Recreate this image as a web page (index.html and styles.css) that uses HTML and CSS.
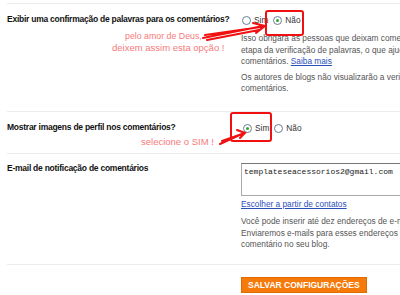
FILE: index.html
```html
<!DOCTYPE html>
<html lang="pt-BR">
<head>
  <meta charset="UTF-8" />
  <title>Configurações de comentários</title>
  <link rel="stylesheet" href="styles.css">
</head>
<body>
  <div class="settings">

    <!-- Verificação de palavras -->
    <div class="row row-words">
      <div class="label">Exibir uma confirmação de palavras para os comentários?</div>
      <div class="field">
        <div class="radios">
          <span class="radio"></span><span class="opt">Sim</span>
          <span class="radio checked"></span><span class="opt">Não</span>
        </div>
        <p class="help">Isso obrigará as pessoas que deixam comentários a passar por uma<br>etapa da verificação de palavras, o que ajudará a reduzir o spam nos<br>comentários. <a href="#">Saiba mais</a></p>
        <p class="help">Os autores de blogs não visualizarão a verificação de palavras nos<br>comentários.</p>
      </div>
      <div class="note note-1">pelo amor de Deus,</div>
      <div class="note note-1b">deixem assim esta opção !</div>
      <div class="mark mark-1"></div>
      <svg class="arrow arrow-1" width="70" height="20" viewBox="0 0 70 20">
        <path d="M2 17 L62 5 M4 14 L60 6 M6 19 L58 9 M52 2 L64 5 L55 12" stroke="#f01010" stroke-width="2" fill="none" stroke-linecap="round" />
      </svg>
    </div>

    <!-- Imagens de perfil -->
    <div class="row row-avatars">
      <div class="label">Mostrar imagens de perfil nos comentários?</div>
      <div class="field">
        <div class="radios">
          <span class="radio checked"></span><span class="opt">Sim</span>
          <span class="radio"></span><span class="opt">Não</span>
        </div>
      </div>
      <div class="note note-2">selecione o SIM !</div>
      <div class="mark mark-2"></div>
      <svg class="arrow arrow-2" width="30" height="18" viewBox="0 0 30 18">
        <path d="M2 16 L26 5 M4 13 L24 6 M19 2 L27 5 L22 10" stroke="#f01010" stroke-width="2" fill="none" stroke-linecap="round" />
      </svg>
    </div>

    <!-- E-mail -->
    <div class="row row-email">
      <div class="label">E-mail de notificação de comentários</div>
      <div class="field">
        <div class="textarea">templateseacessorios2@gmail.com</div>
        <a href="#" class="contacts">Escolher a partir de contatos</a>
        <p class="help help-email">Você pode inserir até dez endereços de e-mail, separados por vírgulas.<br>Enviaremos e-mails para esses endereços quando alguém deixar um<br>comentário no seu blog.</p>
      </div>
    </div>

    <div class="actions">
      <button class="save">SALVAR CONFIGURAÇÕES</button>
    </div>
  </div>
</body>
</html>
```

FILE: styles.css
```css
* {
  margin: 0;
  padding: 0;
  box-sizing: border-box;
}

html, body {
  background: #fff;
  overflow: hidden;
  font-family: 'Liberation Sans', Arial, sans-serif;
  color: #222;
}

.settings {
  width: 600px;
  margin-left: 7px;
  padding-top: 3px;
}

.row {
  position: relative;
  display: grid;
  grid-template-columns: 234px 1fr;
  border-top: 1px solid #ececec;
  padding-top: 10px;
}

.row-words {
  height: 108px;
}

.row-avatars {
  height: 42px;
}

.row-email {
  height: 111px;
  padding-top: 9px;
}

.label {
  font-size: 8.5px;
  font-weight: bold;
  letter-spacing: -0.25px;
  color: #111;
  white-space: nowrap;
}

.field {
  font-size: 8.3px;
  color: #555;
}

.radios {
  display: flex;
  align-items: center;
  margin-left: 1px;
  height: 12px;
  color: #333;
}

.row-avatars .radios {
  margin-left: 2px;
}

.opt {
  margin-left: 3px;
  margin-right: 5px;
}

.radio {
  width: 9px;
  height: 9px;
  border: 1px solid #6b7d92;
  border-radius: 50%;
  background: #fff;
  display: inline-flex;
  align-items: center;
  justify-content: center;
}

.radio.checked::after {
  content: "";
  width: 3px;
  height: 3px;
  border-radius: 50%;
  background: #2fa52f;
}

.help {
  line-height: 11.5px;
  white-space: nowrap;
  margin-top: 4px;
  color: #555;
}

.row-words .help:first-of-type {
  margin-top: 7px;
}

.help-email {
  margin-top: 7px;
}

.help a, .contacts {
  color: #2a4fb8;
  text-decoration: underline;
}

.textarea {
  width: 200px;
  height: 33px;
  border: 1px solid #a9a9a9;
  border-top-color: #777;
  padding: 3px 2px;
  font-family: 'Liberation Mono', monospace;
  font-size: 8px;
  color: #222;
}

.contacts {
  display: inline-block;
  margin-top: 3px;
}

/* anotações em vermelho */
.note {
  position: absolute;
  color: #f77a7c;
  font-size: 9.5px;
  line-height: 11px;
  white-space: nowrap;
}

.note-1 {
  top: 27px;
  left: 118px;
  font-size: 8.8px;
}

.note-1b {
  top: 38px;
  left: 105px;
}

.note-2 {
  top: 24px;
  left: 134px;
}

.mark {
  position: absolute;
  border: 2px solid #f01010;
  border-radius: 3px;
}

.mark-1 {
  top: 6px;
  left: 258px;
  width: 39px;
  height: 26px;
}

.mark-2 {
  top: 0;
  left: 223px;
  width: 42px;
  height: 30px;
}

.arrow {
  position: absolute;
}

.arrow-1 {
  top: 17px;
  left: 194px;
}

.arrow-2 {
  top: 16px;
  left: 211px;
}

.actions {
  border-top: 1px solid #ececec;
  padding: 9px 0 0 234px;
}

.save {
  background: #f57a0a;
  border: 1px solid #e06a00;
  color: #fff;
  font-family: 'Liberation Sans', Arial, sans-serif;
  font-weight: bold;
  font-size: 8.5px;
  padding: 0 6px;
  height: 16px;
}
```
